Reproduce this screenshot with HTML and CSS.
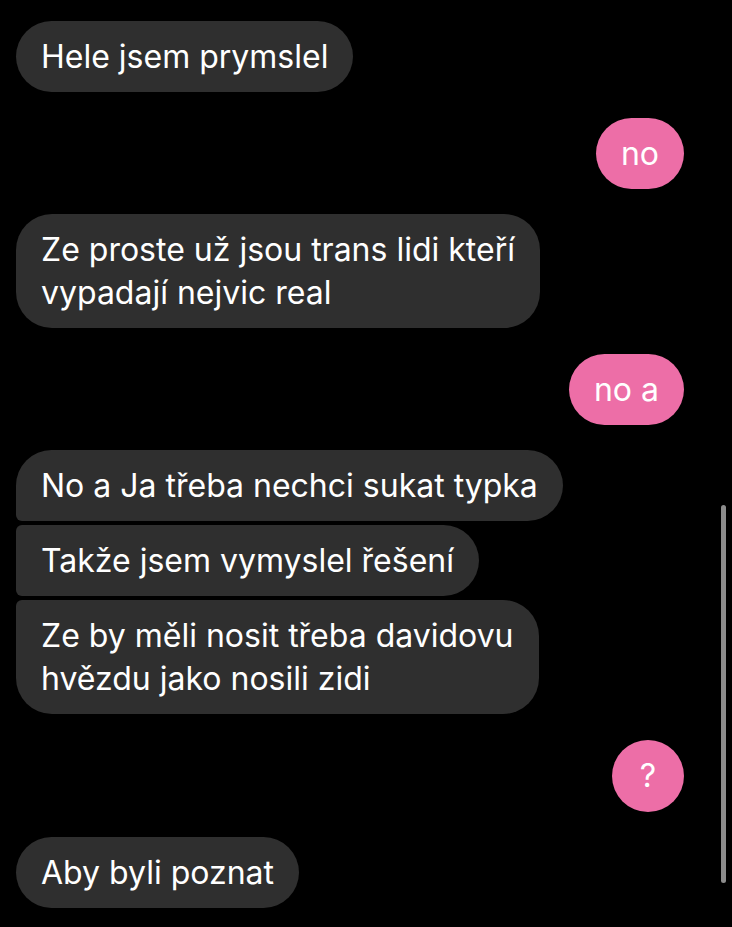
FILE: index.html
```html
<!DOCTYPE html>
<html lang="cs">
<head>
  <meta charset="UTF-8">
  <meta name="viewport" content="width=device-width, initial-scale=1.0">
  <title>Zprávy</title>
  <link rel="stylesheet" href="styles.css">
</head>
<body>
  <div class="chat">
    <div class="msg in">Hele jsem prymslel</div>
    <div class="msg out">no</div>
    <div class="msg in">Ze proste už jsou trans lidi kteří<br>vypadají nejvic real</div>
    <div class="msg out">no a</div>

    <div class="group">
      <div class="msg in">No a Ja třeba nechci sukat typka</div>
      <div class="msg in">Takže jsem vymyslel řešení</div>
      <div class="msg in">Ze by měli nosit třeba davidovu<br>hvězdu jako nosili zidi</div>
    </div>

    <div class="msg out round">?</div>
    <div class="msg in">Aby byli poznat</div>
  </div>

  <div class="scrollbar"></div>
</body>
</html>
```

FILE: styles.css
```css
body {
  margin: 0;
  background-color: #000;
  font-family: Inter, "Noto Sans", sans-serif;
  color: #fff;
  height: 927px;
  overflow: hidden;
}

.chat {
  display: flex;
  flex-direction: column;
  gap: 25.5px;
  padding: 21px 48px 0 16px;
}

.msg {
  max-width: 508px;
  padding: 14px 25px;
  font-size: 32px;
  line-height: 43px;
  border-radius: 36px;
}

.msg.in {
  align-self: flex-start;
  background-color: #2f2f2f;
}

.msg.out {
  align-self: flex-end;
  background-color: #ed6ea7;
}

.msg.round {
  width: 72px;
  height: 72px;
  padding: 0;
  border-radius: 50%;
  text-align: center;
  line-height: 72px;
}

.group {
  display: flex;
  flex-direction: column;
  gap: 4px;
}

.group .msg:first-child {
  border-bottom-left-radius: 6px;
}

.group .msg:not(:first-child):not(:last-child) {
  border-top-left-radius: 6px;
  border-bottom-left-radius: 6px;
}

.group .msg:last-child {
  border-top-left-radius: 6px;
}

.scrollbar {
  position: fixed;
  right: 6px;
  top: 505px;
  width: 5px;
  height: 378px;
  border-radius: 3px;
  background-color: #8c8c8c;
}
```
